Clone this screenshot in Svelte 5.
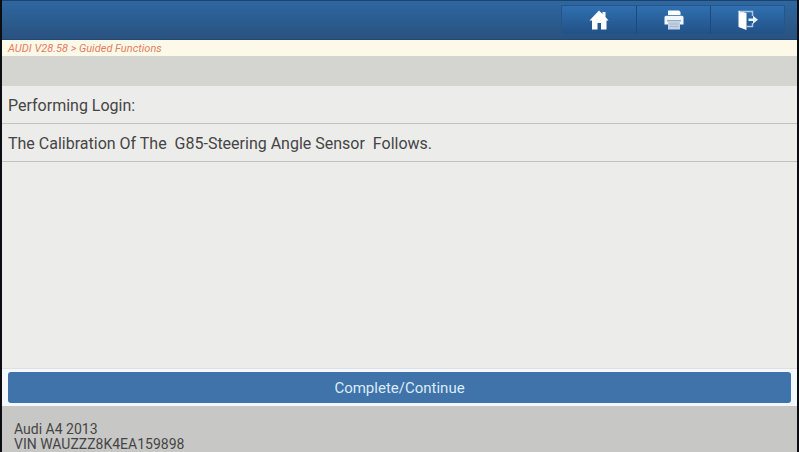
<script>
    let vehicle = { name: 'Audi A4 2013', vin: 'WAUZZZ8K4EA159898' };

    let path = ['AUDI V28.58', 'Guided Functions'];

    let messages = [
        'Performing Login:',
        'The Calibration Of The  G85-Steering Angle Sensor  Follows.'
    ];
</script>

<div class="screen">
    <header>
        <nav class="tools">
            <button aria-label="Home">
                <svg viewBox="0 0 20 20" width="20" height="20" fill="#fff">
                    <path d="M10 0.5 L13.5 4 V2 H16.5 V7 L19.5 10.5 H17.5 V19.5 H12 V13 H8.5 V19.5 H3 V10.5 H0.5 Z" />
                </svg>
            </button>
            <button aria-label="Print">
                <svg viewBox="0 0 20 20" width="20" height="20">
                    <path d="M4 0.5 H15 L16.5 2 V5 H4 Z" fill="#fff" />
                    <path d="M2 5.8 H18 Q19.5 5.8 19.5 7.5 V14.5 H0.5 V7.5 Q0.5 5.8 2 5.8 Z" fill="#f2f7fc" />
                    <path d="M3 10 H17 V11.5 H3 Z" fill="#8fabc8" />
                    <path d="M4 11.5 H16 V19.5 H4 Z" fill="#c3d2e2" />
                    <path d="M5.5 14 H14.5 M5.5 16.5 H14.5" stroke="#a3b9cf" />
                </svg>
            </button>
            <button aria-label="Exit">
                <svg viewBox="0 0 20 20" width="20" height="20">
                    <path d="M0.5 0.5 L8.5 3 V20 L0.5 17 Z" fill="#fff" />
                    <path d="M2 1.5 H14.5 V6 M14.5 13 V16.5 H8.5" fill="none" stroke="#a9c9e8" stroke-width="1.5" />
                    <path d="M10.5 8.5 H15 V5.8 L20 9.8 L15 13.8 V11 H10.5 Z" fill="#e9f3fc" />
                </svg>
            </button>
        </nav>
    </header>

    <div class="breadcrumb">{path.join(' > ')}</div>
    <div class="title-bar"></div>

    <main>
        {#each messages as message}
            <p>{message}</p>
        {/each}
    </main>

    <div class="actions">
        <button class="continue">Complete/Continue</button>
    </div>

    <footer>
        <div>{vehicle.name}</div>
        <div>VIN {vehicle.vin}</div>
    </footer>
</div>

<style>
    :global(body) {
        background: #0b0d10;
    }

    .screen {
        display: flex;
        flex-direction: column;
        box-sizing: border-box;
        min-height: 100vh;
        border: solid #0b0d10;
        border-width: 0 2px;
        background: #ececeb;
        color: #454545;
        font-family: Roboto, "Liberation Sans", sans-serif;
    }

    header {
        display: flex;
        justify-content: flex-end;
        box-sizing: border-box;
        height: 40px;
        padding: 4px 12px;
        border-top: 1px solid #1d426b;
        border-bottom: 1px solid #24486f;
        background: linear-gradient(#2e67a1, #29527f);
    }

    .tools {
        display: flex;
        box-sizing: border-box;
        height: 30px;
        border: 1px solid #25568a;
    }

    .tools button {
        display: flex;
        align-items: center;
        justify-content: center;
        width: 74px;
        padding: 0;
        border: none;
        background: linear-gradient(#3070b1, #225186);
        cursor: pointer;
    }

    .tools button + button {
        border-left: 1px solid #1f4978;
    }

    .breadcrumb {
        padding: 1px 6px 0;
        background: #fdf9e8;
        color: #e47d60;
        font-size: 11px;
        font-style: italic;
        line-height: 15px;
    }

    .title-bar {
        height: 30px;
        background: #d4d4d1;
    }

    main {
        flex: 1;
    }

    main p {
        margin: 0;
        padding: 2px 6px 0;
        border-bottom: 1px solid #c2c2c2;
        font-size: 16px;
        line-height: 35px;
        white-space: pre-wrap;
    }

    .actions {
        padding: 3px 6px;
        border-top: 1px solid #dde1e5;
        background: #f3f8fc;
    }

    .continue {
        display: block;
        width: 100%;
        padding: 1px 0 0;
        border: none;
        border-radius: 3px;
        background: #3f73aa;
        color: #dcebf8;
        font-family: inherit;
        font-size: 15px;
        line-height: 30px;
        cursor: pointer;
    }

    footer {
        padding: 16px 12px 0;
        background: #c7c7c5;
        font-size: 14px;
        line-height: 15px;
    }
</style>
